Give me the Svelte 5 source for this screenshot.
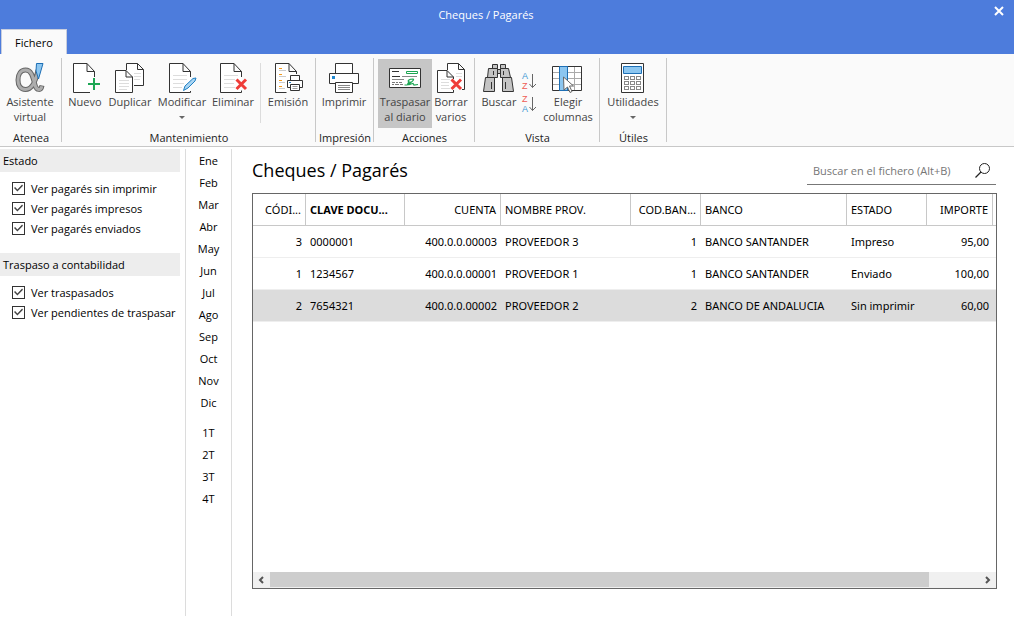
<script>
  const groups = [
    {
      title: "Atenea",
      width: 62,
      pad: 2,
      items: [{ icon: "alpha", label: ["Asistente", "virtual"], width: 56 }],
    },
    {
      title: "Mantenimiento",
      width: 254,
      pad: 2,
      items: [
        { icon: "new", label: ["Nuevo"], width: 42 },
        { icon: "duplicate", label: ["Duplicar"], width: 48 },
        { icon: "edit", label: ["Modificar"], width: 56, menu: true },
        { icon: "delete", label: ["Eliminar"], width: 46 },
        { divider: true },
        { icon: "issue", label: ["Emisión"], width: 48 },
      ],
    },
    {
      title: "Impresión",
      width: 58,
      pad: 4,
      items: [{ icon: "print", label: ["Imprimir"], width: 48 }],
    },
    {
      title: "Acciones",
      width: 101,
      pad: 4,
      items: [
        { icon: "transfer", label: ["Traspasar", "al diario"], width: 54, active: true },
        { icon: "clear", label: ["Borrar", "varios"], width: 38 },
      ],
    },
    {
      title: "Vista",
      width: 125,
      pad: 4,
      items: [
        { icon: "search", label: ["Buscar"], width: 40 },
        { sort: true },
        { icon: "columns", label: ["Elegir", "columnas"], width: 54 },
      ],
    },
    {
      title: "Útiles",
      width: 67,
      pad: 5,
      items: [{ icon: "calc", label: ["Utilidades"], width: 56, menu: true }],
    },
  ];

  let filters = $state([
    {
      title: "Estado",
      options: [
        { label: "Ver pagarés sin imprimir", checked: true },
        { label: "Ver pagarés impresos", checked: true },
        { label: "Ver pagarés enviados", checked: true },
      ],
    },
    {
      title: "Traspaso a contabilidad",
      options: [
        { label: "Ver traspasados", checked: true },
        { label: "Ver pendientes de traspasar", checked: true },
      ],
    },
  ]);

  const months = ["Ene", "Feb", "Mar", "Abr", "May", "Jun", "Jul", "Ago", "Sep", "Oct", "Nov", "Dic"];
  const quarters = ["1T", "2T", "3T", "4T"];

  const columns = [
    { key: "codigo", label: "CÓDI...", width: 53, right: true },
    { key: "clave", label: "CLAVE DOCU...", width: 99, bold: true },
    { key: "cuenta", label: "CUENTA", width: 96, right: true },
    { key: "nombre", label: "NOMBRE PROV.", width: 130 },
    { key: "codBanco", label: "COD.BAN...", width: 70, right: true },
    { key: "banco", label: "BANCO", width: 146 },
    { key: "estado", label: "ESTADO", width: 80 },
    { key: "importe", label: "IMPORTE", width: 66, right: true },
  ];

  const rows = [
    { codigo: 3, clave: "0000001", cuenta: "400.0.0.00003", nombre: "PROVEEDOR 3", codBanco: 1, banco: "BANCO SANTANDER", estado: "Impreso", importe: "95,00" },
    { codigo: 1, clave: "1234567", cuenta: "400.0.0.00001", nombre: "PROVEEDOR 1", codBanco: 1, banco: "BANCO SANTANDER", estado: "Enviado", importe: "100,00" },
    { codigo: 2, clave: "7654321", cuenta: "400.0.0.00002", nombre: "PROVEEDOR 2", codBanco: 2, banco: "BANCO DE ANDALUCIA", estado: "Sin imprimir", importe: "60,00" },
  ];

  let selected = $state(2);
  let query = $state("");
</script>

{#snippet icon(name)}
  <svg class="icon" viewBox="0 0 32 32" width="32" height="32" fill="none" aria-hidden="true">
    {#if name === "alpha"}
      <path d="M24 8C22 18 18 27.500 11.500 27.500C6.500 27.500 4 23.500 4 18C4 12 7 8 11.500 8C18 8 19 16 21 23C22.500 28.500 27 29 28 23.500" stroke="#666" stroke-width="5" />
      <path d="M24 8.800C22 18 18 27.500 11.500 27.500C6.500 27.500 4 23.500 4 18C4 12 7 8 11.500 8C18 8 19 16 21 23C22.500 28.500 27 29 27.800 24.300" stroke="#adadad" stroke-width="3" />
      <path d="M22.500 1.500H29L24.500 17L22 9z" fill="#8cc6f0" stroke="#1d6fb5" />
    {:else if name === "new"}
      <path d="M21 30.500H4.500V1.500H18L25.500 9.500V15M18 1.500V9.500H25.500" fill="#fff" stroke="#333" />
      <path d="M25 16v12M19 22h12" stroke="#1ca653" stroke-width="2" />
    {:else if name === "duplicate"}
      <path d="M12.500 8V1.500H23.500L29.500 7.500V23.500H20M23.500 1.500V7.500H29.500" fill="#fff" stroke="#333" />
      <path d="M20 11.500h7M20 14.500h7M20 17.500h6" stroke="#ddd" />
      <path d="M1.500 8.500H12L18.500 15V30.500H1.500zM12 8.500V15H18.500" fill="#fff" stroke="#333" />
      <path d="M5 18.500h10M5 21.500h10M5 24.500h10M5 27.500h8" stroke="#ddd" />
    {:else if name === "edit"}
      <path d="M24.500 29V30.500H3.500V1.500H17L24.500 9.500V15M17 1.500V9.500H24.500" fill="#fff" stroke="#333" />
      <path d="M7 13.500h14M7 17.500h14M7 21.500h11M7 25.500h9" stroke="#ddd" />
      <path d="M17.500 28.500L19 24L27 16.500L30 16L29 19L22 26z" fill="#a9d5f3" stroke="#1f80c4" />
    {:else if name === "delete"}
      <path d="M24.500 28.500V30.500H3.500V1.500H17L24.500 9.500V15M17 1.500V9.500H24.500" fill="#fff" stroke="#333" />
      <path d="M7 13.500h14M7 17.500h11M7 21.500h10M7 25.500h11" stroke="#ddd" />
      <path d="M19.500 17.500L29 27M29 17.500L19.500 27" stroke="#ef3c38" stroke-width="3" />
    {:else if name === "issue"}
      <path d="M14.500 30.500H3.500V1.500H17L24.500 9.500V12M17 1.500V9.500H24.500" fill="#fff" stroke="#333" />
      <path d="M7 6.500h3M7 12.500h3M7 18.500h3M7 24.500h3" stroke="#f39a1e" />
      <path d="M7 8.500h7M7 14.500h7M7 20.500h6M7 26.500h6" stroke="#ccc" />
      <path d="M18.500 18V13.500H27.500V18M15.500 18.500H30.500V25.500H27.500M18.500 25.500H15.500V18.500M18.500 22.500H27.500V28.500H18.500z" fill="#fff" stroke="#333" />
      <path d="M20.500 24.500h5M20.500 26.500h5" stroke="#999" />
      <path d="M17 20h2v1h-2z" fill="#1f80c4" />
    {:else if name === "print"}
      <path d="M7.500 11V1.500H24.500V11" fill="#fff" stroke="#333" />
      <path d="M7 21.500H1.500V11.500H30.500V21.500H25" fill="#fff" stroke="#333" />
      <path d="M7.500 20.500H24.500V30.500H7.500z" fill="#fff" stroke="#333" />
      <path d="M10 23.500h12M10 25.500h12M10 27.500h12" stroke="#888" />
      <path d="M4 14h3v3H4z" fill="#1f88d0" />
    {:else if name === "transfer"}
      <path d="M.5 6.500H31.500V25.500H.5z" fill="#fff" stroke="#333" />
      <path d="M3 9.500h7M3 14.500h8" stroke="#333" />
      <path d="M13 14.500h15M3 17.500h12" stroke="#888" />
      <path d="M3 20.500h3M7 20.500h2M10 20.500h3M3 22.500h2M6 22.500h4M11 22.500h3" stroke="#777" />
      <path d="M17.500 9.500H28.500V11.500H17.500z" stroke="#1ca653" />
      <path d="M15.500 23H18C22 21 26 17.500 24 17C20 17 17.500 19.500 20.500 20C17 22 19.500 23.500 22 22L24 21.500L25 23L29 22.500" stroke="#1ca653" stroke-width="1.200" />
    {:else if name === "clear"}
      <path d="M12.500 8V1.500H23.500L29.500 7.500V27.500H27M23.500 1.500V7.500H29.500" fill="#fff" stroke="#333" />
      <path d="M21 11.500h6M21 14.500h6" stroke="#ddd" />
      <path d="M18.500 28V30.500H2.500V8.500H12L18.500 15V17M12 8.500V15H18.500" fill="#fff" stroke="#333" />
      <path d="M6 17.500h9M6 20.500h8M6 23.500h8M6 26.500h9" stroke="#ddd" />
      <path d="M16.500 17.500L26 27M26 17.500L16.500 27" stroke="#ef3c38" stroke-width="3" />
    {:else if name === "search"}
      <path d="M9.500 2.500H14.500V6.500H9.500zM17.500 2.500H22.500V6.500H17.500zM13.500 7.500H18.500V11.500H13.500z" fill="#c4c4c4" stroke="#333" />
      <path d="M5.500 6.500H14.500V15.500H4.500zM17.500 6.500H25.500L27.500 15.500H17.500z" fill="#c4c4c4" stroke="#333" />
      <path d="M2.500 15.500H11.500V29.500H.5zM19.500 15.500H28.500L30.500 29.500H19.500z" fill="#c4c4c4" stroke="#333" />
      <path d="M10.500 9v4M20.500 9v4M8.500 20v7M22.500 20v7" stroke="#333" />
    {:else if name === "columns"}
      <path d="M.5 4.500H29.500V28.500H.5z" fill="#fff" />
      <path d="M1 10.500h29M1 16.500h29M1 22.500h29M22.500 4v24" stroke="#aaa" />
      <path d="M.5 4.500H29.500V28.500H.5z" stroke="#333" />
      <path d="M7.500 4.500H15.500V28.500H7.500z" fill="#8cc6f0" stroke="#1d6fb5" />
      <path d="M11.500 15L21.500 24H17.500L20 29.500L18 30.500L15.500 25L12 28z" fill="#fff" stroke="#666" />
    {:else if name === "calc"}
      <path d="M4.500 1.500H26.500V30.500H4.500z" fill="#fff" stroke="#333" />
      <path d="M6.500 4.500H24.500V11.500H6.500z" fill="#8cc6f0" stroke="#1d6fb5" />
      {#each [14.5, 19.5, 24.5] as y}
        {#each [7.5, 13.5, 19.5] as x}
          <rect {x} {y} width="4" height="3" stroke="#888" />
        {/each}
      {/each}
    {/if}
  </svg>
{/snippet}

{#snippet sortIcon(first, second)}
  <svg class="sort-icon" viewBox="0 0 18 22" width="18" height="22" aria-hidden="true">
    <text x="1" y="9" fill={first === "A" ? "#3c97d3" : "#ee5a55"}>{first}</text>
    <text x="1" y="19" fill={second === "A" ? "#3c97d3" : "#ee5a55"}>{second}</text>
    <path d="M11.500 4V17.500M8.500 14L11.500 17.500L15 14" fill="none" stroke="#666" />
  </svg>
{/snippet}

<div class="window">
  <header>
    <div class="titlebar">
      <span class="caption">Cheques / Pagarés</span>
      <button class="close" aria-label="Cerrar">
        <svg viewBox="0 0 10 10" width="10" height="10"><path d="M1 1L9 9M9 1L1 9" stroke="#fff" stroke-width="2" /></svg>
      </button>
    </div>
    <button class="tab">Fichero</button>
  </header>

  <div class="ribbon">
    {#each groups as group}
      <section class="group" style:width="{group.width}px">
        <div class="tools" style:padding-left="{group.pad}px">
          {#each group.items as item}
            {#if item.divider}
              <span class="divider"></span>
            {:else if item.sort}
              <div class="sort">
                <button aria-label="Orden ascendente">{@render sortIcon("A", "Z")}</button>
                <button aria-label="Orden descendente">{@render sortIcon("Z", "A")}</button>
              </div>
            {:else}
              <button class="tool" class:active={item.active} style:width="{item.width}px">
                {@render icon(item.icon)}
                {#each item.label as line}
                  <span>{line}</span>
                {/each}
                {#if item.menu}
                  <i class="arrow"></i>
                {/if}
              </button>
            {/if}
          {/each}
        </div>
        <div class="group-title">{group.title}</div>
      </section>
    {/each}
  </div>

  <div class="body">
    <aside>
      {#each filters as filter}
        <fieldset>
          <legend>{filter.title}</legend>
          {#each filter.options as option}
            <label>
              <input type="checkbox" bind:checked={option.checked} />
              {option.label}
            </label>
          {/each}
        </fieldset>
      {/each}
    </aside>

    <nav>
      {#each months as month}
        <button>{month}</button>
      {/each}
      <div class="quarters">
        {#each quarters as quarter}
          <button>{quarter}</button>
        {/each}
      </div>
    </nav>

    <main>
      <div class="heading">
        <h1>Cheques / Pagarés</h1>
        <div class="search">
          <input type="text" aria-label="Buscar en el fichero" placeholder="Buscar en el fichero (Alt+B)" bind:value={query} />
          <button aria-label="Buscar">
            <svg viewBox="0 0 17 17" width="17" height="17" fill="none" stroke="#222">
              <circle cx="10.500" cy="6.500" r="5" />
              <path d="M7 10L1.500 15.500" stroke-width="1.300" />
            </svg>
          </button>
        </div>
      </div>

      <div class="grid">
        <div class="rows">
          <table>
            <colgroup>
              {#each columns as col}
                <col style:width="{col.width}px" />
              {/each}
              <col />
            </colgroup>
            <thead>
              <tr>
                {#each columns as col}
                  <th class:right={col.right} class:bold={col.bold}>{col.label}</th>
                {/each}
                <th class="rest"></th>
              </tr>
            </thead>
            <tbody>
              {#each rows as row, i}
                <tr class:selected={selected === i} onclick={() => (selected = i)}>
                  {#each columns as col}
                    <td class:right={col.right}>{row[col.key]}</td>
                  {/each}
                  <td></td>
                </tr>
              {/each}
            </tbody>
          </table>
        </div>
        <div class="scrollbar">
          <button aria-label="Desplazar a la izquierda">
            <svg viewBox="0 0 8 8" width="8" height="8"><path d="M5 1L2 4L5 7" /></svg>
          </button>
          <div class="track"><div class="thumb"></div></div>
          <button aria-label="Desplazar a la derecha">
            <svg viewBox="0 0 8 8" width="8" height="8"><path d="M2 1L5 4L2 7" /></svg>
          </button>
        </div>
      </div>
    </main>
  </div>
</div>

<style>
  :global(body) {
    margin: 0;
    background: #fff;
  }

  .window {
    display: flex;
    flex-direction: column;
    min-height: 100vh;
    font-family: "Open Sans", "Noto Sans", sans-serif;
    font-size: 11px;
    line-height: 15px;
    color: #000;
  }

  button {
    margin: 0;
    padding: 0;
    border: 0;
    background: none;
    font: inherit;
    color: inherit;
  }

  svg {
    display: block;
  }

  /* title bar and tab */
  header {
    background: #4d7cdc;
  }

  .titlebar {
    display: grid;
    grid-template-columns: 30px 1fr 30px;
    align-items: center;
    height: 29px;
    color: #fff;
  }

  .caption {
    grid-column: 2;
    padding-right: 42px;
    text-align: center;
  }

  .close {
    display: grid;
    place-items: center;
    height: 22px;
    align-self: start;
  }

  .tab {
    display: block;
    width: 66px;
    height: 25px;
    margin-left: 1px;
    background: #fafafa;
    border: 1px solid #c8cede;
    border-bottom: 0;
  }

  /* ribbon */
  .ribbon {
    display: flex;
    height: 84px;
    padding: 4px 0;
    background: #fafafa;
    border-bottom: 1px solid #c8c8c8;
  }

  .group {
    display: flex;
    flex-direction: column;
    box-sizing: border-box;
    border-right: 1px solid #c8c8c8;
  }

  .tools {
    display: flex;
    height: 69px;
    padding-top: 1px;
  }

  .tool {
    display: flex;
    flex-direction: column;
    align-items: center;
    box-sizing: border-box;
    height: 69px;
    padding-top: 3px;
    color: #444;
    white-space: nowrap;
  }

  .tool.active {
    background: #c6c6c6;
  }

  .icon {
    flex: none;
  }

  .arrow {
    margin-top: 7px;
    border: 3px solid transparent;
    border-top-color: #666;
    border-bottom: 0;
  }

  .divider {
    width: 1px;
    height: 60px;
    margin: 4px 3px 0 4px;
    background: #dcdcdc;
  }

  .sort {
    display: flex;
    flex-direction: column;
    align-items: center;
    gap: 1px;
    width: 22px;
    padding-top: 11px;
  }

  .sort-icon {
    font-family: "Liberation Sans", sans-serif;
    font-size: 9px;
  }

  .group-title {
    display: flex;
    justify-content: center;
    padding: 2px 0 0 1px;
    color: #222;
    white-space: nowrap;
  }

  /* side filters */
  .body {
    display: flex;
    flex: 1;
    padding: 2px 0;
  }

  aside {
    width: 180px;
    padding-right: 5px;
    border-right: 1px solid #dcdcdc;
  }

  fieldset {
    margin: 0 0 15px;
    padding: 0;
    border: 0;
    min-width: 0;
  }

  legend {
    box-sizing: border-box;
    width: 100%;
    margin-bottom: 6px;
    padding: 4px 3px;
    background: #ededed;
  }

  label {
    display: flex;
    align-items: center;
    gap: 6px;
    height: 20px;
    padding-left: 12px;
    white-space: nowrap;
  }

  label input {
    display: grid;
    place-items: center;
    flex: none;
    appearance: none;
    box-sizing: border-box;
    width: 13px;
    height: 13px;
    margin: 0;
    border: 1px solid #333;
    background: #fff;
  }

  label input:checked::after {
    content: "";
    width: 9px;
    height: 9px;
    background: #444;
    clip-path: polygon(0 50%, 12% 38%, 38% 66%, 90% 12%, 100% 24%, 38% 88%);
  }

  nav {
    display: flex;
    flex-direction: column;
    width: 45px;
    border-right: 1px solid #dcdcdc;
  }

  nav button {
    display: block;
    width: 100%;
    height: 22px;
  }

  .quarters {
    margin-top: 8px;
  }

  /* list */
  main {
    display: flex;
    flex-direction: column;
    flex: 1;
    min-width: 0;
    padding: 0 17px 27px 20px;
  }

  .heading {
    display: flex;
    justify-content: space-between;
    height: 44px;
  }

  h1 {
    margin: 9px 0 0;
    font-size: 18px;
    font-weight: 400;
    line-height: 24px;
  }

  .search {
    display: flex;
    align-items: center;
    box-sizing: border-box;
    width: 189px;
    height: 28px;
    margin: 8px 1px 0 0;
    padding: 0 5px 1px 6px;
    border-bottom: 1px solid #777;
  }

  .search input {
    flex: 1;
    min-width: 0;
    padding: 0;
    border: 0;
    outline: 0;
    background: none;
    font: inherit;
  }

  .search input::placeholder {
    color: #767676;
  }

  .grid {
    display: flex;
    flex-direction: column;
    flex: 1;
    border: 1px solid #666;
  }

  .rows {
    flex: 1;
    overflow: hidden;
  }

  table {
    width: 100%;
    table-layout: fixed;
    border-collapse: separate;
    border-spacing: 0;
    font-family: "Noto Sans", "Open Sans", sans-serif;
  }

  th,
  td {
    box-sizing: border-box;
    height: 32px;
    padding: 0 4px;
    border-bottom: 1px solid #eee;
    font-weight: 400;
    text-align: left;
    white-space: nowrap;
  }

  th {
    border-right: 1px solid #c8c8c8;
    border-bottom-color: #c8c8c8;
  }

  th.bold {
    font-weight: 700;
  }

  th.rest {
    padding: 0;
    border-right: 0;
  }

  td:last-child {
    padding: 0;
  }

  .right {
    text-align: right;
  }

  .selected td {
    background: #dcdcdc;
  }

  .scrollbar {
    display: flex;
    height: 16px;
    background: #f0f0f0;
  }

  .scrollbar button {
    display: grid;
    place-items: center;
    width: 17px;
  }

  .scrollbar path {
    fill: none;
    stroke: #555;
    stroke-width: 2;
  }

  .track {
    flex: 1;
  }

  .thumb {
    width: 93%;
    height: 15px;
    background: #cdcdcd;
  }
</style>
